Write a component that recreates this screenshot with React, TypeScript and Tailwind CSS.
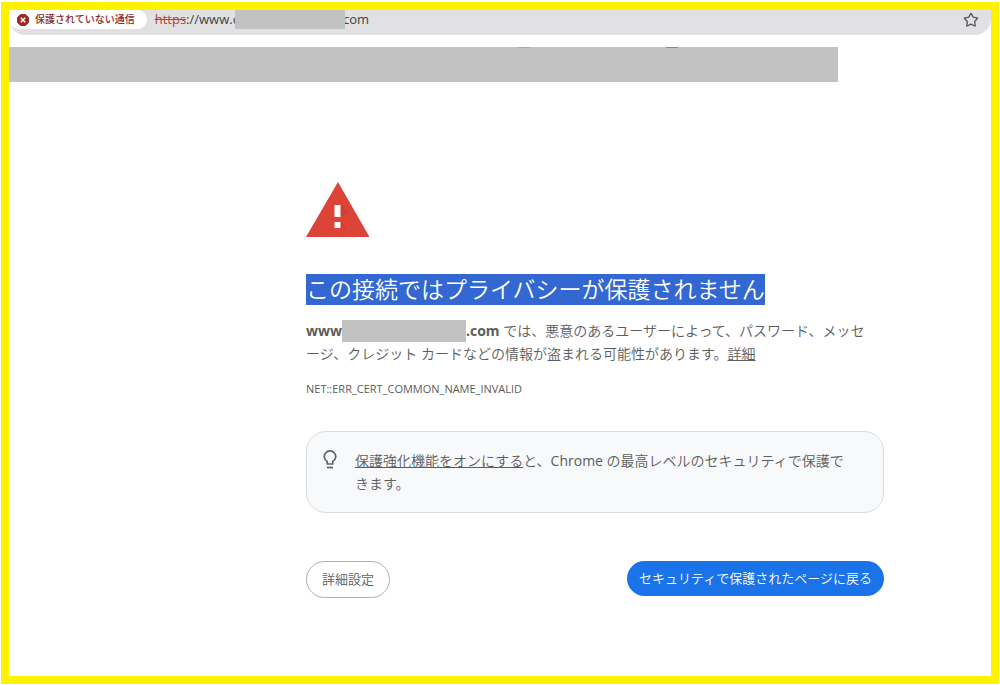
import { Star } from "lucide-react";

const Toolbar = () => (
  <header className="flex h-[25px] items-center rounded-b-2xl bg-[#e1e1e4] pr-3 font-['Open_Sans','Noto_Sans_CJK_JP',sans-serif]">
    <button
      type="button"
      className="flex h-[19px] shrink-0 items-center gap-1.5 self-start rounded-full rounded-tl-lg bg-white pr-3 pl-2 text-[10px] font-medium text-[#8f2a25]"
    >
      <svg viewBox="0 0 12 12" className="h-3 w-3" aria-hidden="true">
        <path
          d="M3.6 .5h4.8L11.5 3.6v4.8L8.4 11.500H3.6L.5 8.4V3.6z"
          fill="#a12a24"
          stroke="#a12a24"
          strokeLinejoin="round"
        />
        <path d="M3.8 3.8l4.4 4.4M8.2 3.8L3.8 8.2" stroke="#fff" strokeWidth="1.5" />
      </svg>
      保護されていない通信
    </button>
    <div className="ml-2 flex flex-1 items-center self-start text-[13px] leading-[19px] text-[#3f4144]">
      <span className="text-[#b3433c] line-through">https</span>
      <span>://www.c</span>
      <span className="relative -ml-1 h-[19px] w-[110px] bg-[#c2c2c2]"></span>
      <span className="-ml-0.5">com</span>
    </div>
    <button type="button" aria-label="Bookmark" className="mb-1.5 text-[#56585b]">
      <Star size={16} strokeWidth={2} />
    </button>
  </header>
);

const WarningIcon = () => (
  <svg viewBox="0 0 64 56" className="h-14 w-16" aria-hidden="true">
    <path d="M32 0L63.500 55H0z" fill="#db4437" />
    <path d="M34.500 22l9 9-9 3zM34.500 40l6 6-6 1z" fill="#c23a2f" opacity=".5" />
    <path d="M28.500 23h6v12h-6zM28.500 40h6v6h-6z" fill="#fff" />
  </svg>
);

const BulbIcon = () => (
  <svg viewBox="0 0 14 19" className="mt-px h-[19px] w-3.5 shrink-0" aria-hidden="true">
    <path
      d="M4.300 14V11.600A5.700 5.700 0 1 1 9.700 11.600V14z"
      fill="none"
      stroke="#5f6368"
      strokeWidth="1.700"
      strokeLinejoin="round"
    />
    <path d="M4 17.500h6" stroke="#5f6368" strokeWidth="1.700" />
  </svg>
);

export default function App() {
  return (
    <div className="min-h-screen bg-white px-px pt-0.5 pb-px font-['Open_Sans','Noto_Sans_CJK_JP',sans-serif]">
      <div className="min-h-[682px] border-8 border-[#fff200]">
        <Toolbar />
        <div className="mt-3 mr-[153px] h-[35px] bg-[#c2c2c2]">
          <div className="flex pl-[509px]">
            <span className="h-px w-3 bg-[#8fb5a8]"></span>
            <span className="ml-[136px] h-px w-3 bg-[#888888]"></span>
          </div>
        </div>

        <main className="mt-[100px] mr-[107px] ml-[297px] text-sm leading-[23px] text-[#5c5c5c]">
          <WarningIcon />
          <h1 className="mt-9 w-fit bg-[#3367d1] text-[23px] leading-[31px] font-[350] whitespace-nowrap text-white">
            この接続ではプライバシーが保護されません
          </h1>

          <p className="mt-3.5 font-[350]">
            <strong className="font-bold">www.</strong>
            <span className="-ml-1 inline-block h-[22px] w-[124px] bg-[#c2c2c2] align-bottom"></span>
            <strong className="font-bold">.com</strong>
            {" では、悪意のあるユーザーによって、パスワード、メッセ"}
            <br />
            ージ、クレジット カードなどの情報が盗まれる可能性があります。
            <a href="#details" className="underline">
              詳細
            </a>
          </p>
          <p className="mt-3 text-[11px] leading-[23px]">NET::ERR_CERT_COMMON_NAME_INVALID</p>

          <section className="mt-[31px] flex gap-[18px] rounded-[20px] border border-[#dadce0] bg-[#f8f9fa] px-4 py-[17px]">
            <BulbIcon />
            <p className="font-[350]">
              <a href="#enhanced" className="underline">
                保護強化機能をオンにする
              </a>
              と、<span className="font-normal">Chrome</span> の最高レベルのセキュリティで保護で
              <br />
              きます。
            </p>
          </section>

          <div className="mt-12 flex items-start justify-between text-[13px]">
            <button
              type="button"
              className="h-[37px] rounded-full border border-[#b0b0b0] px-[15px] font-[350]"
            >
              詳細設定
            </button>
            <button
              type="button"
              className="h-[35px] rounded-full bg-[#1a73e8] px-3 font-[350] text-white"
            >
              セキュリティで保護されたページに戻る
            </button>
          </div>
        </main>
      </div>
    </div>
  );
}
